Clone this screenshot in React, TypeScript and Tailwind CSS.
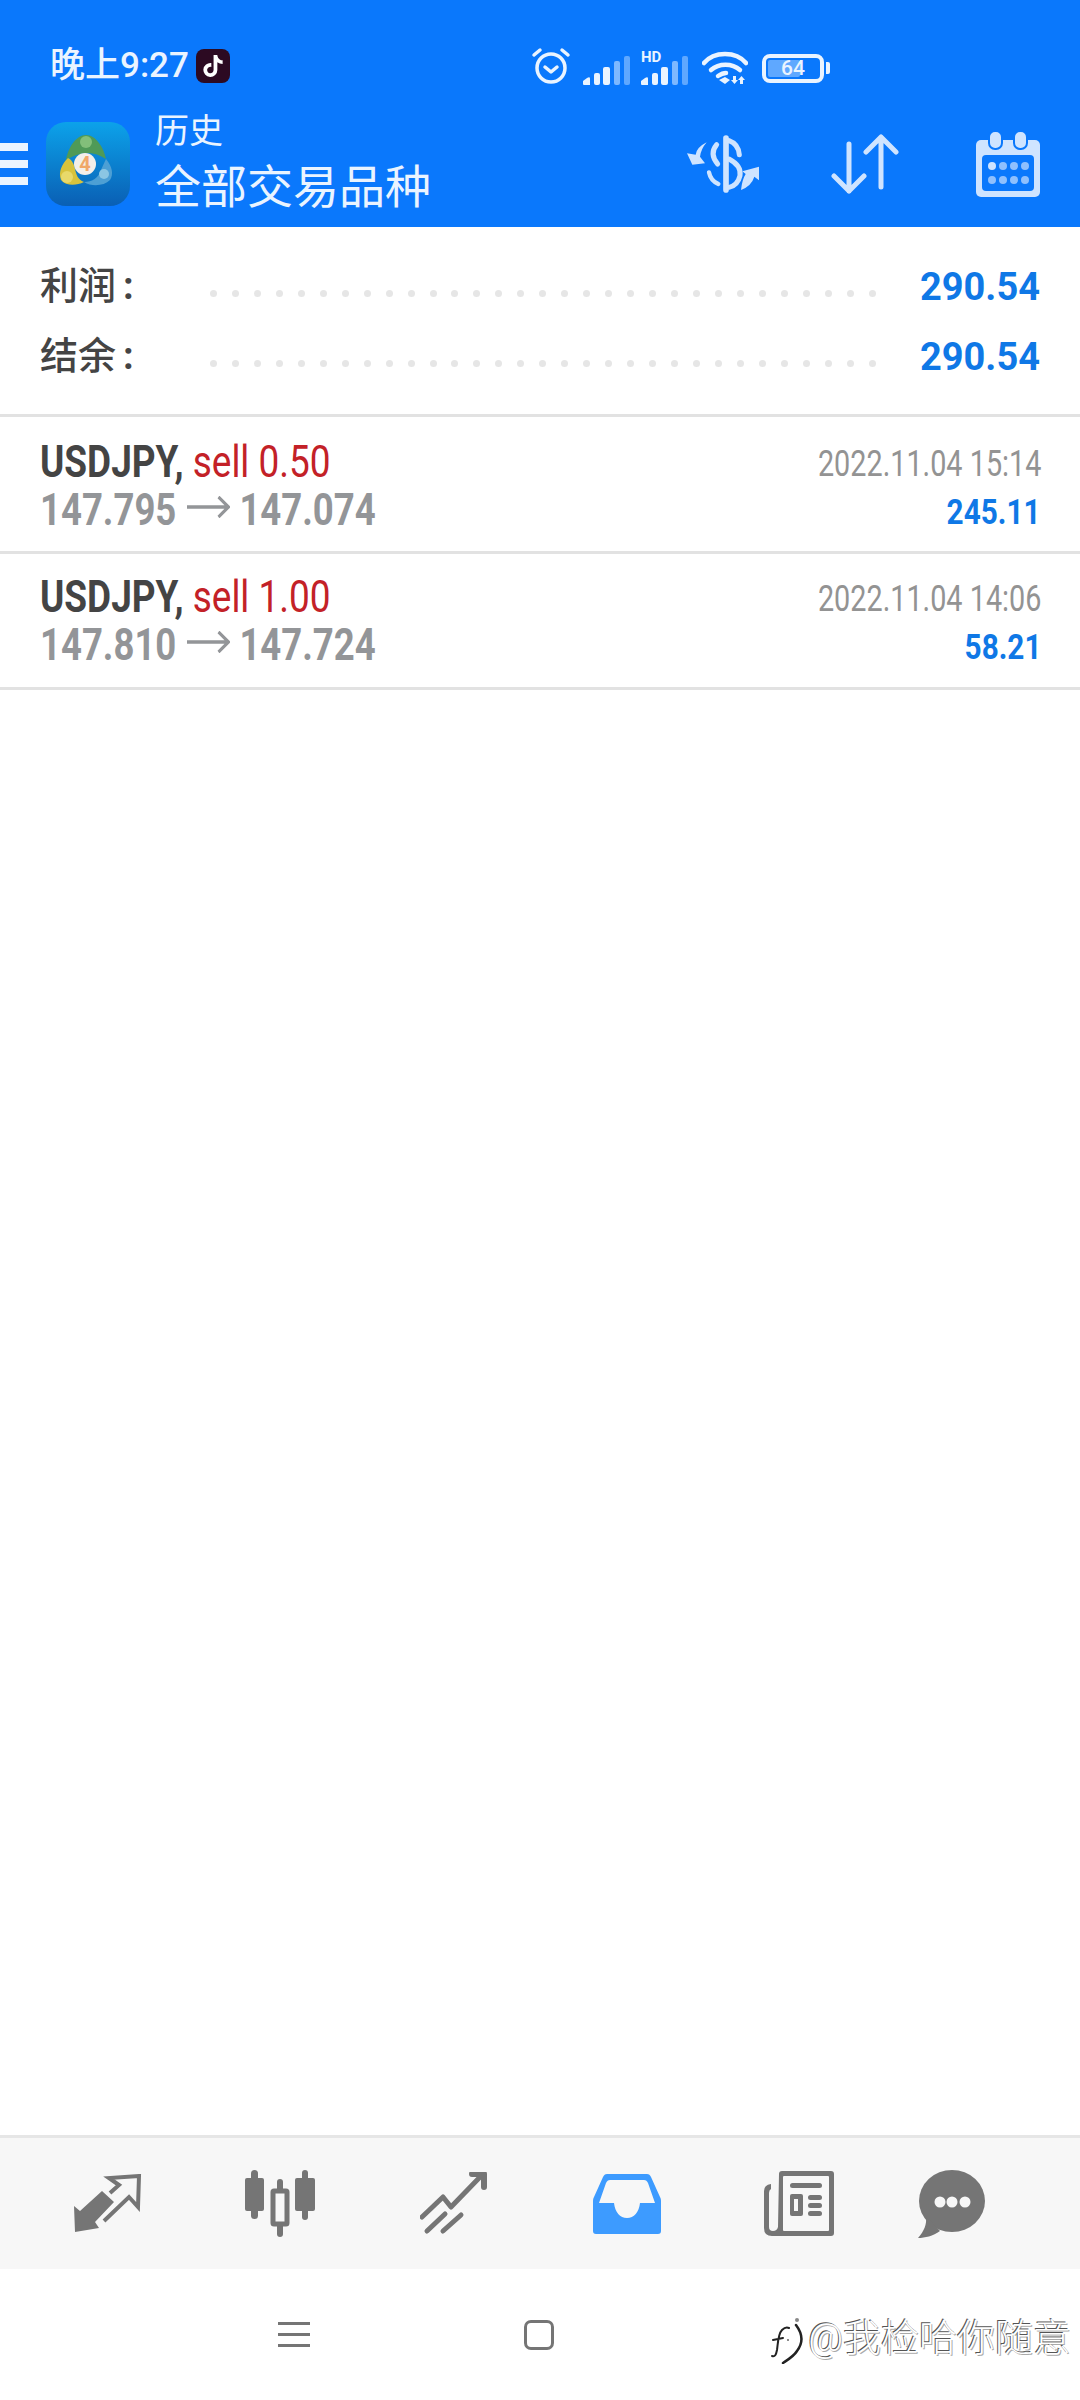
import React from 'react';
import { FaTiktok } from 'react-icons/fa';

const cjk = "font-['Roboto','Noto_Sans_CJK_SC',sans-serif]";

const Signal = ({ hd }: { hd?: boolean }) => (
  <svg width="48" height="34" viewBox="0 0 48 34" className="shrink-0 overflow-visible">
    {hd && <text x="0" y="11" fontSize="15" fontWeight="700" fill="#eaf4ff" fontFamily="Roboto">HD</text>}
    <g fill="#eaf4ff">
      <path d="M0 30l4-3c2-1 3-1 3 1v6H1c-1 0-1-1-1-1z" />
      <rect x="11" y="22" width="6" height="12" rx="2" />
      <rect x="20" y="16" width="7" height="18" rx="2" />
    </g>
    <rect x="31" y="10" width="6" height="24" rx="2" fill="#7db8ff" />
    <rect x="41" y="5" width="6" height="29" rx="2" fill="#5fa8ff" />
  </svg>
);

const StatusIcons = () => (
  <div className="flex items-end">
    <svg width="40" height="38" viewBox="0 0 40 38" fill="none" stroke="#eaf4ff" strokeWidth="3.5" strokeLinecap="round" strokeLinejoin="round">
      <circle cx="20" cy="21" r="14" />
      <path d="M14 20l6 5 6-5" />
      <path d="M3 8l6-5M37 8l-6-5" />
    </svg>
    <div className="ml-[12px]"><Signal /></div>
    <div className="ml-[10px]"><Signal hd /></div>
    <svg className="ml-[13px]" width="46" height="34" viewBox="0 0 46 34" fill="none" stroke="#eaf4ff" strokeWidth="4.5" strokeLinecap="round">
      <path d="M2 12C12 0 34 0 44 12" />
      <path d="M9 19c8-7 21-7 29 0" />
      <path d="M16 25c3-2 6-3 8-3" />
      <path d="M17 29l6-3 5 3-5 4z" fill="#eaf4ff" stroke="none" />
      <path d="M31 25h3v4h2l-3.500 4-3.500-4h2zM38 33h3v-4h2l-3.500-4-3.500 4h2z" fill="#eaf4ff" stroke="none" />
    </svg>
    <div className="mb-[2px] ml-[14px] flex items-center">
      <div className="relative flex h-[29px] w-[62px] items-center justify-center overflow-hidden rounded-[8px] border-[4px] border-[#eaf4ff]">
        <div className="absolute left-[2px] top-[2px] h-[17px] w-[32px] rounded-[2px] bg-[#5fa8ff]" />
        <span className="relative text-[21px] font-medium leading-none text-[#eaf4ff]">64</span>
      </div>
      <div className="ml-[2px] h-[12px] w-[4px] rounded-r-[2px] bg-[#eaf4ff]" />
    </div>
  </div>
);

const AppLogo = () => (
  <svg width="84" height="84" viewBox="0 0 84 84" className="shrink-0">
    <defs>
      <linearGradient id="logoBg" x1="0" y1="0" x2="0" y2="1">
        <stop offset="0" stopColor="#0ca2ea" />
        <stop offset="1" stopColor="#0a5fb4" />
      </linearGradient>
    </defs>
    <rect width="84" height="84" rx="20" fill="url(#logoBg)" />
    <path d="M40 13C50 13 58 26 60 37 54 33 48 31 42 31 34 31 27 34 20 38 22 26 30 13 40 13Z" fill="#4f9a57" />
    <circle cx="40" cy="20" r="6" fill="#82bf7a" />
    <path d="M22 36C16 42 12 50 15 58 20 64 30 64 38 60 32 58 30 52 29 47 28 42 26 38 22 36Z" fill="#d8c33c" />
    <circle cx="21" cy="55" r="6" fill="#e8d96a" />
    <path d="M60 37C66 44 68 52 64 58 58 64 46 65 38 60 46 60 52 56 54 50 56 46 58 41 60 37Z" fill="#4d9fd4" />
    <circle cx="58" cy="52" r="5" fill="#8cc6e3" />
    <circle cx="39" cy="42" r="11" fill="#f3efe9" />
    <text x="39" y="49" textAnchor="middle" fontSize="20" fontWeight="700" fill="#f0a868" fontFamily="Roboto">4</text>
  </svg>
);

const DollarIcon = () => (
  <svg width="74" height="60" viewBox="40 30 222 180" fill="none" stroke="#cfe4ff" strokeLinecap="round">
    <path d="M163 42v156" strokeWidth="17" />
    <path d="M135 62Q112 90 138 120" strokeWidth="15" />
    <path d="M172 50Q200 60 203 92" strokeWidth="15" />
    <path d="M172 105Q210 125 205 155 198 185 172 190" strokeWidth="15" />
    <path d="M112 145Q117 170 140 180" strokeWidth="13" />
    <path d="M105 55Q75 70 72 92L46 88 62 122 100 118 85 98Q88 75 105 55Z" fill="#cfe4ff" stroke="none" />
    <path d="M208 198Q212 165 222 150L212 142 262 128 266 172 248 158Q240 185 208 198Z" fill="#cfe4ff" stroke="none" />
  </svg>
);

const SortIcon = () => (
  <svg width="69" height="60" viewBox="0 0 69 60" fill="none" stroke="#cfe4ff" strokeWidth="5" strokeLinecap="round" strokeLinejoin="round">
    <path d="M18 10v47M3 42l15 15 15-15" />
    <path d="M50 3v50M35 18L50 3l15 15" />
  </svg>
);

const CalendarIcon = () => (
  <svg width="64" height="66" viewBox="0 0 64 66">
    <rect x="0" y="9" width="64" height="57" rx="5" fill="#cfe4ff" />
    <rect x="6" y="24" width="52" height="36" rx="4" fill="#0a78fc" />
    <rect x="13" y="0" width="13" height="18" rx="6" fill="#cfe4ff" stroke="#0a78fc" strokeWidth="2" />
    <rect x="38" y="0" width="13" height="18" rx="6" fill="#cfe4ff" stroke="#0a78fc" strokeWidth="2" />
    <g fill="#8fc0fd">
      <circle cx="16" cy="35" r="4" fill="#cfe4ff" />
      <circle cx="27" cy="35" r="4" />
      <circle cx="38" cy="35" r="4" />
      <circle cx="49" cy="35" r="4" />
      <circle cx="16" cy="49" r="4" />
      <circle cx="27" cy="49" r="4" />
      <circle cx="38" cy="49" r="4" />
      <circle cx="49" cy="49" r="4" />
    </g>
  </svg>
);

const SummaryRow = ({ label, value }: { label: string; value: string }) => (
  <div className="flex h-[70px] items-center pl-[40px] pr-[40px]">
    <span className={`${cjk} -mt-[2px] flex w-[170px] text-[38px] font-medium leading-none text-[#444444]`}>
      {label}
      <span className="ml-[7px] font-bold">:</span>
    </span>
    <div className="mt-[13px] flex w-[666px] justify-between">
      {Array.from({ length: 31 }).map((_, i) => (
        <span key={i} className="h-[7px] w-[7px] rounded-full bg-[#e6e6e6]" />
      ))}
    </div>
    <span className="ml-auto text-[38px] font-bold leading-none text-[#0f78e6]">{value}</span>
  </div>
);

type Deal = { lots: string; open: string; close: string; time: string; profit: string };

const DealRow = ({ deal }: { deal: Deal }) => (
  <div className="flex h-[136.5px] items-start justify-between border-b-[3px] border-[#e2e2e2] pl-[40px] pr-[39px] pt-[21px] last:pt-[19px] font-['Roboto',sans-serif]">
    <div className="flex flex-col">
      <div className="h-[48px] origin-left scale-x-[0.84] whitespace-nowrap text-[44px] leading-[48px]">
        <span className="font-bold text-[#444444]">USDJPY,</span>
        <span className="font-normal text-[#c32127]"> sell {deal.lots}</span>
      </div>
      <div className="flex h-[48px] origin-left scale-x-[0.83] items-center whitespace-nowrap text-[44px] font-bold leading-[48px] text-[#939598]">
        <span>{deal.open}</span>
        <svg className="-mt-[6px] ml-[13px] mr-[11px]" width="52" height="22" viewBox="0 0 52 22" fill="none" stroke="#939598" strokeWidth="3.500">
          <path d="M0 11h50M38 1l12 10-12 10" />
        </svg>
        <span>{deal.close}</span>
      </div>
    </div>
    <div className="flex flex-col items-end">
      <div className="mt-[4px] h-[49px] origin-right scale-x-[0.8] whitespace-nowrap text-[36px] leading-[44px] text-[#939393]">{deal.time}</div>
      <div className="h-[44px] origin-right scale-x-[0.85] whitespace-nowrap text-[35px] font-bold leading-[44px] text-[#0f78e6]">{deal.profit}</div>
    </div>
  </div>
);

const TabIcons = () => (
  <>
    <svg width="68" height="60" viewBox="0 0 68 60" className="shrink-0" fill="none">
      <path d="M0 32L6 37 28 17 40 28 21 48 25 54 1 58Z" fill="#757575" />
      <path d="M36 19L45 11 35 4 65 2 64 33 55 23 30 47" stroke="#757575" strokeWidth="4" strokeLinejoin="miter" />
    </svg>
    <svg className="ml-[102px] shrink-0" width="72" height="67" viewBox="0 0 72 67">
      <g fill="#757575">
        <rect x="7" y="0" width="7" height="49" rx="3.500" />
        <rect x="1" y="8" width="19" height="33" rx="2" />
        <rect x="33" y="9" width="6" height="58" rx="3" />
        <rect x="58" y="0" width="6" height="50" rx="3" />
        <rect x="51" y="8" width="20" height="33" rx="2" />
      </g>
      <rect x="29" y="21" width="14" height="33" rx="1" fill="#f7f7f7" stroke="#757575" strokeWidth="5" />
    </svg>
    <svg className="ml-[104px] shrink-0" width="69" height="64" viewBox="0 0 69 64" fill="none" stroke="#757575" strokeWidth="5" strokeLinecap="round" strokeLinejoin="round">
      <path d="M2 45L23 25 31 35 61 4" />
      <path d="M52 2h12v13" strokeWidth="6" />
      <path d="M7 59L25 42M23 59L41 43" />
    </svg>
    <svg className="ml-[104px] shrink-0" width="68" height="62" viewBox="0 0 68 62">
      <path d="M14 1c-2 0-3 1-4 3L1 24c-1 2-1 3-1 5v29c0 2 1 3 3 3h62c2 0 3-1 3-3V29c0-2 0-3-1-5L58 4c-1-2-2-3-4-3z" fill="#3d9bff" />
      <path d="M17 7h34c2 0 3 1 4 3l7 20H47c-1 9-6 15-13 15s-12-6-13-15H6l7-20c1-2 2-3 4-3z" fill="#f7f7f7" />
    </svg>
    <svg className="ml-[103px] shrink-0" width="70" height="66" viewBox="0 0 70 66">
      <path fill="#757575" d="M15 3Q15 0 18 0H67Q70 0 70 3V62Q70 65 67 65H8Q0 65 0 57V20Q0 14 7 13V18Q5 19 5 22V56Q5 60 9 60 13 60 14 56Z" />
      <rect x="19" y="5" width="46" height="55" rx="1" fill="#f7f7f7" />
      <g fill="#757575">
        <rect x="26" y="12" width="32" height="5" rx="2.500" />
        <rect x="26" y="23" width="13" height="22" rx="2" />
        <rect x="44" y="24" width="14" height="5" rx="2.500" />
        <rect x="44" y="32" width="14" height="5" rx="2.500" />
        <rect x="44" y="40" width="14" height="5" rx="2.500" />
      </g>
      <rect x="30" y="28" width="4" height="12" fill="#f7f7f7" />
    </svg>
    <svg className="ml-[84px] shrink-0" width="68" height="68" viewBox="0 0 68 68">
      <ellipse cx="34" cy="31" rx="33" ry="31" fill="#757575" />
      <path d="M8 46c1 9-2 15-8 22 7 0 15-2 22-7z" fill="#757575" />
      <circle cx="22" cy="32" r="5.500" fill="#f7f7f7" />
      <circle cx="34" cy="32" r="5.500" fill="#f7f7f7" />
      <circle cx="47" cy="32" r="5.500" fill="#f7f7f7" />
    </svg>
  </>
);

const deals: Deal[] = [
  { lots: '0.50', open: '147.795', close: '147.074', time: '2022.11.04 15:14', profit: '245.11' },
  { lots: '1.00', open: '147.810', close: '147.724', time: '2022.11.04 14:06', profit: '58.21' },
];

const App = () => {
  return (
    <div className="relative flex h-[2400px] w-[1080px] flex-col overflow-hidden bg-white font-['Roboto',sans-serif]">
      <header className="h-[227px] shrink-0 bg-[#0a78fc]">
        <div className="flex h-[101px] items-center pl-[50px] pt-[30px]">
          <div className="flex w-[481px] items-center">
            <span className={`${cjk} text-[35px] font-medium leading-none text-[#eaf4ff]`}>晚上9:27</span>
            <div className="ml-[7px] flex h-[34px] w-[34px] items-center justify-center rounded-[8px] bg-[#2c0a22]">
              <FaTiktok className="text-[22px] text-white" />
            </div>
          </div>
          <StatusIcons />
        </div>
        <div className="flex h-[126px] items-center pr-[40px]">
          <div className="flex w-[28px] flex-col gap-[9px]">
            <div className="h-[8px] bg-[#eaf4ff]" />
            <div className="h-[8px] bg-[#eaf4ff]" />
            <div className="h-[8px] bg-[#eaf4ff]" />
          </div>
          <div className="ml-[18px]"><AppLogo /></div>
          <div className={`${cjk} ml-[25px] -mt-[5px] flex flex-col gap-[8px] text-[#eaf4ff]`}>
            <span className="text-[34px] leading-[42px]">历史</span>
            <span className="text-[46px] leading-[54px]">全部交易品种</span>
          </div>
          <div className="ml-auto flex items-center">
            <DollarIcon />
            <div className="ml-[72px]"><SortIcon /></div>
            <div className="ml-[76px]"><CalendarIcon /></div>
          </div>
        </div>
      </header>

      <section className="flex h-[190px] shrink-0 flex-col justify-center border-b-[3px] border-[#e2e2e2] pt-[3px]">
        <SummaryRow label="利润" value="290.54" />
        <SummaryRow label="结余" value="290.54" />
      </section>

      <main className="flex-1">
        {deals.map((deal) => (
          <DealRow key={deal.time} deal={deal} />
        ))}
      </main>

      <nav className="flex h-[134px] shrink-0 items-center border-t-[3px] border-[#e6e6e6] bg-[#f7f7f7] pl-[74px]">
        <TabIcons />
      </nav>

      <footer className="flex h-[131px] shrink-0 items-center justify-center gap-[214px] pr-[248px]">
        <div className="flex w-[32px] flex-col gap-[8px]">
          <div className="h-[3px] bg-[#757575]" />
          <div className="h-[3px] bg-[#757575]" />
          <div className="h-[3px] bg-[#757575]" />
        </div>
        <div className="h-[30px] w-[30px] rounded-[7px] border-[3px] border-[#757575]" />
      </footer>

      {/* watermark over the nav bar */}
      <div className="absolute bottom-[36px] right-[9px] flex items-center gap-[3px]">
        <svg width="34" height="46" viewBox="0 0 34 46" fill="none" stroke="#222222" strokeWidth="2" strokeLinecap="round">
          <path d="M1 38c3 1 4-1 5-6 1-7 1-16 5-20 2-2 5-3 7-2M2 22l10-2" />
          <path d="M25 7c6 8 8 17 1 26-3 5-8 8-14 12" strokeWidth="2.500" />
          <circle cx="26" cy="2" r="2" fill="#888888" stroke="none" />
          <circle cx="17" cy="22" r="1" fill="#666666" stroke="none" />
        </svg>
        <span className={`${cjk} -mt-[6px] text-[38px] font-light leading-none text-white [text-shadow:-1px_-1px_0_#555555,1px_1px_0_#aaaaaa]`}>@我检哈你随意</span>
      </div>
    </div>
  );
};

export default App;
